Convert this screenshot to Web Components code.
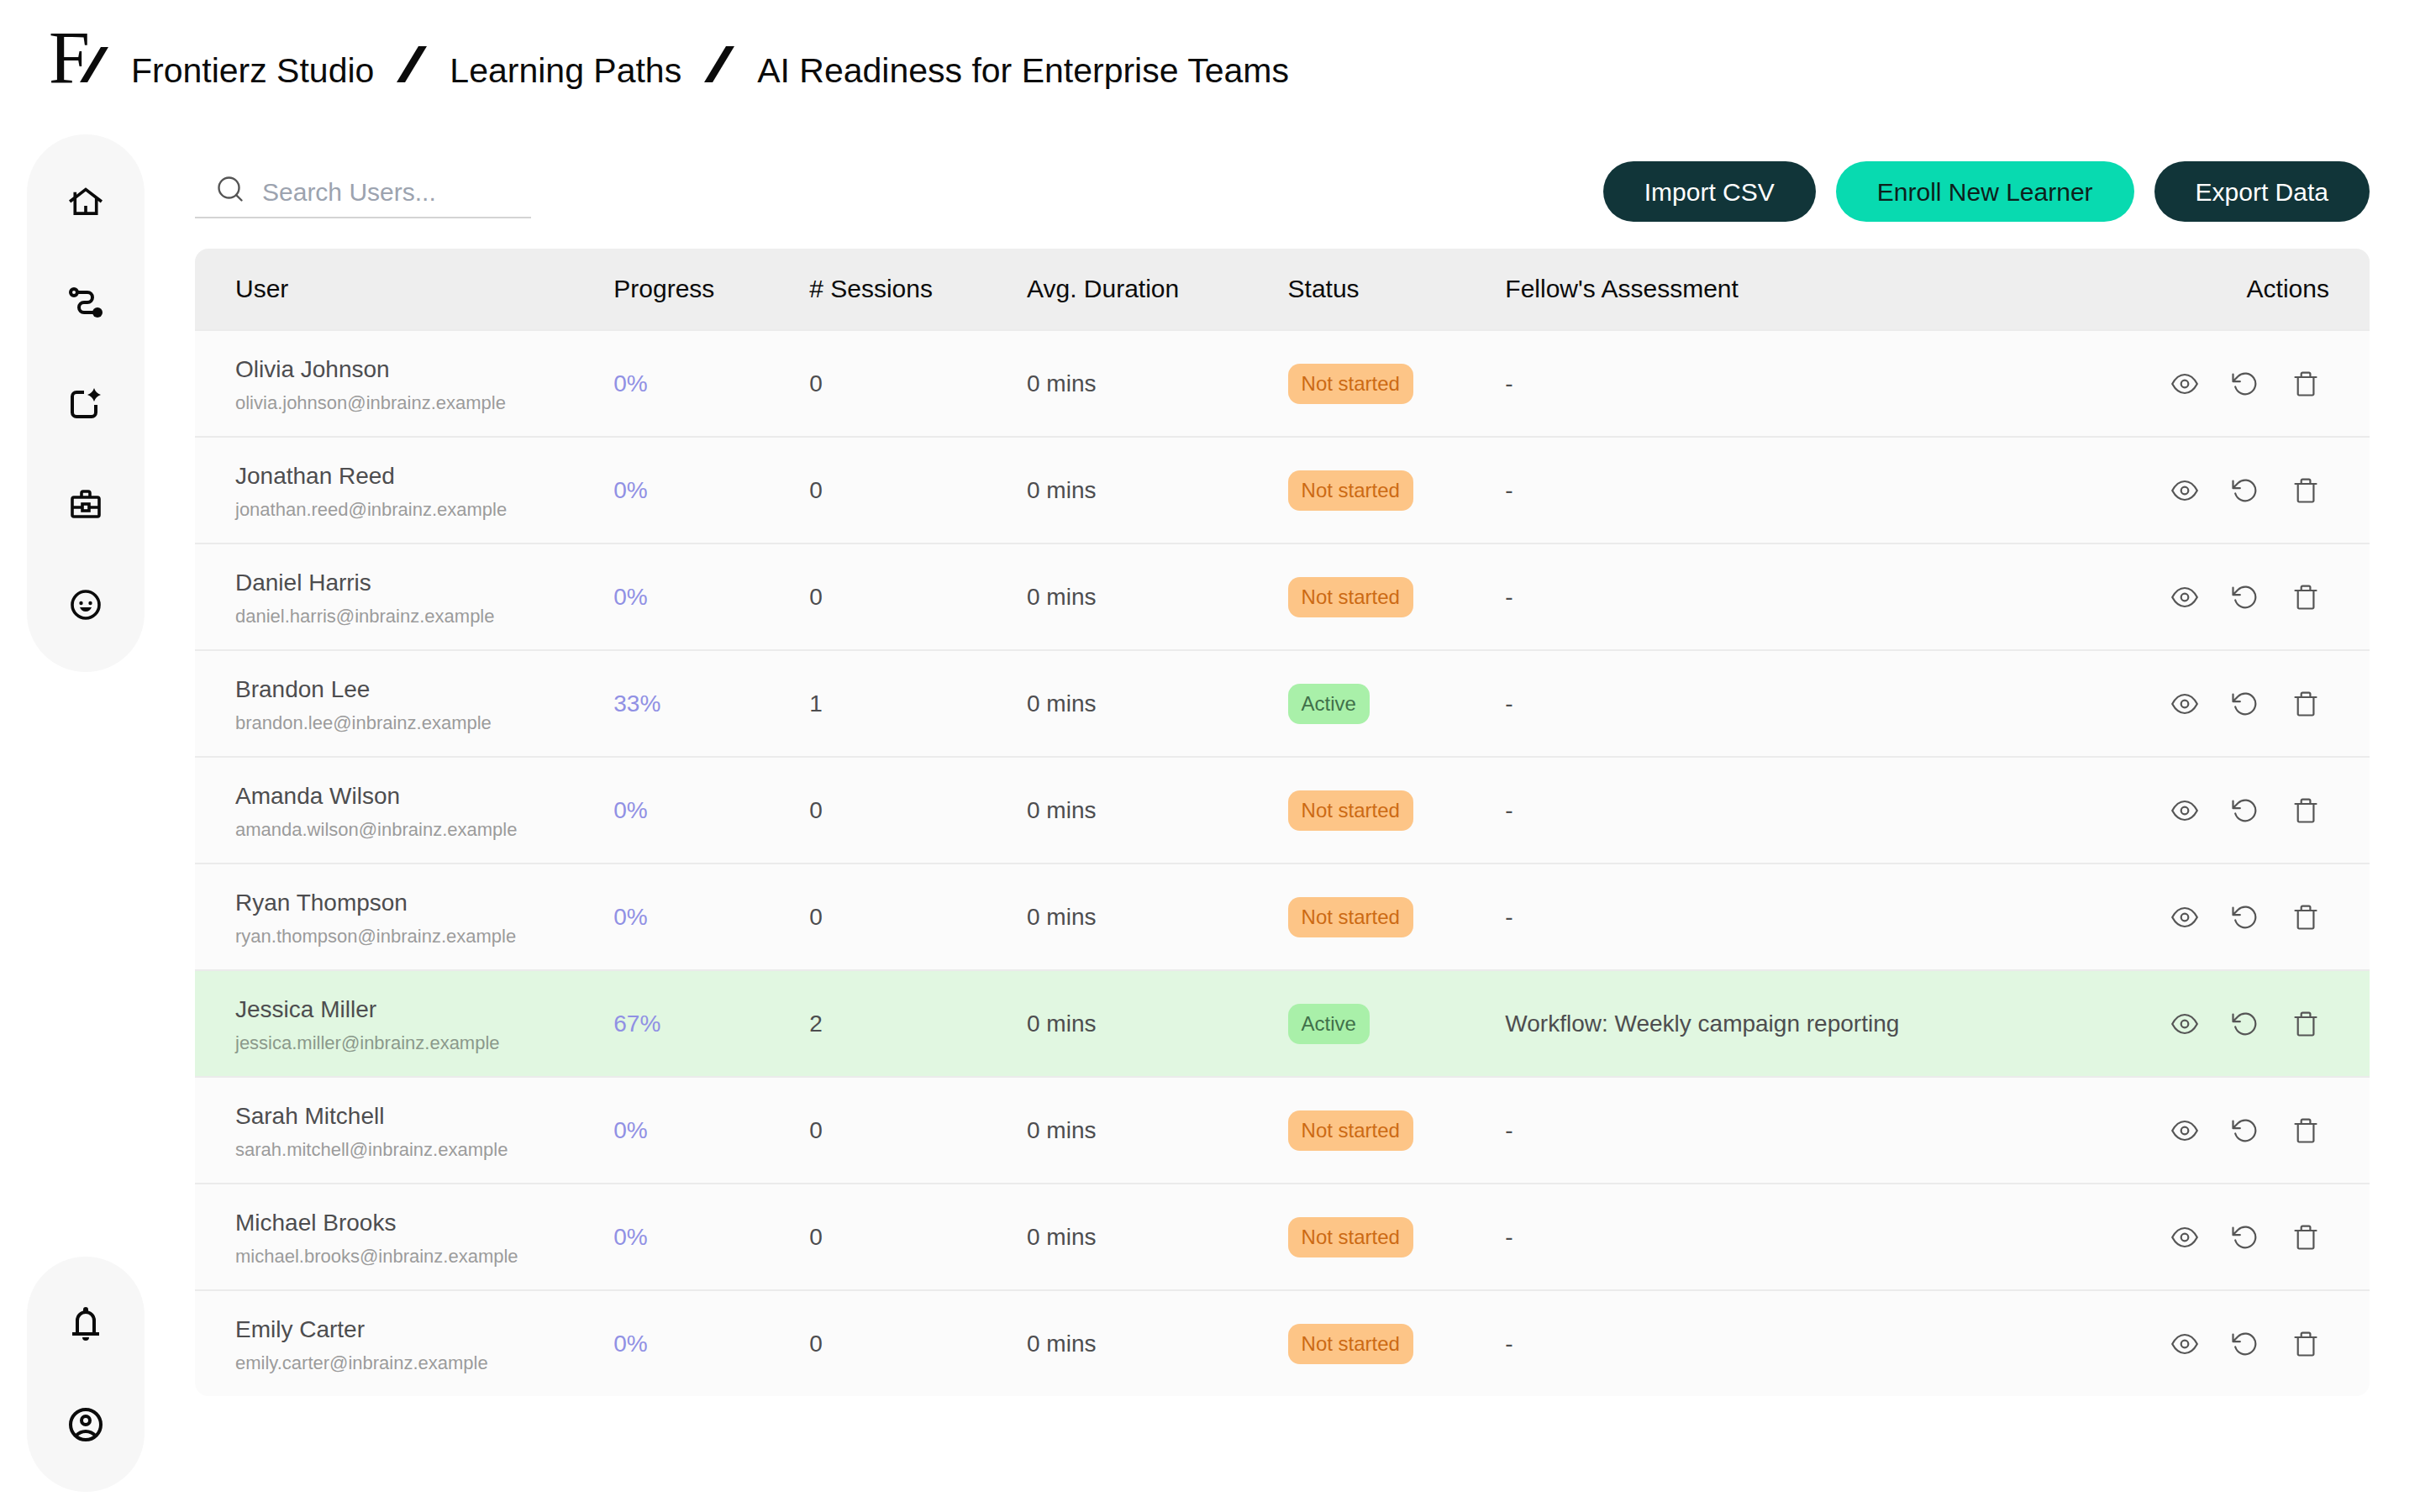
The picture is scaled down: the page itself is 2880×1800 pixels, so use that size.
<!DOCTYPE html>
<html lang="en">
<head>
<meta charset="utf-8">
<title>AI Readiness for Enterprise Teams</title>
<style>
* {
    box-sizing: border-box;
}
body {
    margin: 0;
    background: #fff;
    color: #0b0b0b;
    font-family: "Liberation Sans", Arial, sans-serif;
    font-size: 30px;
}
</style>
</head>
<body>
<app-shell>
    <path-header slot="header"></path-header>
    <nav-rail slot="nav" label="Main" icons="home,route,create,briefcase,smile"></nav-rail>
    <nav-rail slot="nav" label="Account" icons="bell,account"></nav-rail>
    <search-field slot="toolbar" placeholder="Search Users..."></search-field>
    <pill-button slot="toolbar">Import CSV</pill-button>
    <pill-button slot="toolbar" accent>Enroll New Learner</pill-button>
    <pill-button slot="toolbar">Export Data</pill-button>
    <learner-table></learner-table>
</app-shell>

<script>
const navIcons = {
    home: `<svg viewBox="-1.2 -1 26.4 26.4" fill="currentColor"><path d="M12 3L6 7.6V6H4v3.1L1 11.4 2.2 13 4 11.6V21h16v-9.4l1.8 1.4L23 11.4zM18 19h-5v-4h-2v4H6v-8.9l6-4.6 6 4.6z"/></svg>`,
    route: `<svg viewBox="0 0 48 48" fill="none" stroke="currentColor" stroke-width="4"><circle cx="10" cy="12" r="4"/><path d="M14 12h12a6 6 0 0 1 0 12h-4a6 6 0 0 0 0 12h12"/><circle cx="38" cy="36" r="6" fill="currentColor" stroke="none"/></svg>`,
    create: `<svg viewBox="0 0 48 48" fill="none" stroke="currentColor" stroke-width="4"><path d="M22 11H13a5 5 0 0 0-5 5v19a5 5 0 0 0 5 5h18a5 5 0 0 0 5-5v-9"/><path d="M34 6q2 6 8 8-6 2-8 8-2-6-8-8 6-2 8-8z" fill="currentColor" stroke="none"/></svg>`,
    briefcase: `<svg viewBox="0 0 48 48" fill="none" stroke="currentColor" stroke-width="3.600"><rect x="8" y="16" width="32" height="23" rx="2"/><path d="M19 16v-5a2 2 0 0 1 2-2h6a2 2 0 0 1 2 2v5M8 28h11M29 28h11"/><rect x="20" y="24" width="8" height="8"/></svg>`,
    smile: `<svg viewBox="0 0 48 48" fill="none" stroke="currentColor" stroke-width="3.600"><circle cx="24" cy="24" r="16"/><g fill="currentColor" stroke="none"><circle cx="18.500" cy="22" r="2.200"/><circle cx="29.500" cy="22" r="2.200"/><path d="M17 27h14q-2 5-7 5t-7-5z"/></g></svg>`,
    bell: `<svg viewBox="0 0 48 48" fill="none" stroke="currentColor" stroke-width="4"><path d="M14 35V20a10 10 0 0 1 20 0v15M8 36h32"/><g fill="currentColor" stroke="none"><path d="M21 10V7a3 3 0 0 1 6 0v3zM20 40h8a4 4 0 0 1-8 0z"/></g></svg>`,
    account: `<svg viewBox="0 0 48 48" fill="none" stroke="currentColor" stroke-width="4"><circle cx="24" cy="24" r="18"/><circle cx="24" cy="19" r="5"/><path d="M12 37.500c7-7.500 17-7.500 24 0"/></svg>`
};

const actionIcons = {
    View: `<svg viewBox="0 0 32 32"><path d="M1.200 16C5 9 10 5 16 5s11 4 14.800 11C27 23 22 27 16 27S5 23 1.200 16z"/><circle cx="16" cy="16" r="4.300"/></svg>`,
    Reset: `<svg viewBox="0 0 32 32"><path d="M4.200 19.500A12.300 12.300 0 1 0 7.500 7L1.500 13M1.500 4.500v8.700h8.300"/></svg>`,
    Delete: `<svg viewBox="0 0 32 32"><path d="M3.500 8h25M6.700 8v20a1.500 1.500 0 0 0 1.500 1.500h15.700a1.500 1.500 0 0 0 1.500-1.500V8M10.700 8V4.200A1.500 1.500 0 0 1 12.200 2.700h7.700a1.500 1.500 0 0 1 1.500 1.500V8"/></svg>`
};

const learners = [
    { name: "Olivia Johnson", progress: 0, sessions: 0 },
    { name: "Jonathan Reed", progress: 0, sessions: 0 },
    { name: "Daniel Harris", progress: 0, sessions: 0 },
    { name: "Brandon Lee", progress: 33, sessions: 1 },
    { name: "Amanda Wilson", progress: 0, sessions: 0 },
    { name: "Ryan Thompson", progress: 0, sessions: 0 },
    { name: "Jessica Miller", progress: 67, sessions: 2, assessment: "Workflow: Weekly campaign reporting", highlight: true },
    { name: "Sarah Mitchell", progress: 0, sessions: 0 },
    { name: "Michael Brooks", progress: 0, sessions: 0 },
    { name: "Emily Carter", progress: 0, sessions: 0 }
];

class AppShell extends HTMLElement {
    constructor() {
        super();
        this.attachShadow({ mode: "open" }).innerHTML = `
        <style>
        * {
            box-sizing: border-box;
        }
        :host {
            display: flex;
            flex-direction: column;
            min-height: 100vh;
        }
        .body {
            flex: 1;
            display: flex;
            gap: 60px;
            padding: 0 60px 24px 32px;
        }
        aside {
            flex: none;
            display: flex;
            flex-direction: column;
            justify-content: space-between;
            gap: 32px;
        }
        main {
            flex: 1;
            min-width: 0;
            padding-top: 32px;
        }
        .toolbar {
            display: flex;
            gap: 24px;
            margin-bottom: 32px;
        }
        </style>
        <slot name="header"></slot>
        <div class="body">
            <aside><slot name="nav"></slot></aside>
            <main>
                <div class="toolbar"><slot name="toolbar"></slot></div>
                <slot></slot>
            </main>
        </div>`;
    }
}

class PathHeader extends HTMLElement {
    constructor() {
        super();
        const slash = `<svg class="slash" width="36" height="43" viewBox="0 0 36 43" aria-hidden="true"><path d="M26 0h10L10 43H0z"/></svg>`;
        this.attachShadow({ mode: "open" }).innerHTML = `
        <style>
        :host {
            display: block;
            padding: 24px 58px 0;
        }
        nav {
            display: flex;
            align-items: baseline;
            gap: 27px;
            min-height: 136px;
            font-size: 41px;
            line-height: 48px;
            white-space: nowrap;
        }
        a {
            color: inherit;
            text-decoration: none;
        }
        .logo {
            display: flex;
            align-items: baseline;
            font-family: "Liberation Serif", "Times New Roman", serif;
            font-size: 88px;
            line-height: 90px;
        }
        .logo svg {
            margin-left: -12px;
        }
        svg {
            flex: none;
            fill: currentColor;
        }
        </style>
        <nav aria-label="Breadcrumb">
            <a class="logo" href="#" aria-label="Home">F<svg width="34" height="42" viewBox="0 0 34 42" aria-hidden="true"><path d="M25 0h9L9 42H0z"/></svg></a>
            <a href="#">Frontierz Studio</a>
            ${slash}
            <a href="#">Learning Paths</a>
            ${slash}
            <a href="#" aria-current="page">AI Readiness for Enterprise Teams</a>
        </nav>`;
    }
}

class NavRail extends HTMLElement {
    connectedCallback() {
        const links = this.getAttribute("icons").split(",")
            .map(name => `<a href="#${name}" aria-label="${name}">${navIcons[name]}</a>`)
            .join("");
        this.attachShadow({ mode: "open" }).innerHTML = `
        <style>
        :host {
            display: block;
        }
        nav {
            display: flex;
            flex-direction: column;
            padding: 20px 10px;
            border-radius: 70px;
            background: #f7f7f7;
        }
        a {
            display: flex;
            align-items: center;
            justify-content: center;
            width: 120px;
            height: 120px;
            color: inherit;
        }
        svg {
            width: 48px;
            height: 48px;
        }
        </style>
        <nav aria-label="${this.getAttribute("label")}">${links}</nav>`;
    }
}

class SearchField extends HTMLElement {
    connectedCallback() {
        this.attachShadow({ mode: "open" }).innerHTML = `
        <style>
        :host {
            display: block;
            width: 400px;
            margin-right: auto;
        }
        label {
            display: flex;
            align-items: center;
            gap: 20px;
            height: 68px;
            padding-left: 24px;
            border-bottom: 2px solid #d4d4d4;
            box-sizing: border-box;
        }
        svg {
            flex: none;
            width: 36px;
            height: 36px;
            fill: none;
            stroke: #555;
            stroke-width: 1.6;
            stroke-linecap: round;
        }
        input {
            flex: 1;
            min-width: 0;
            padding: 8px 0 0;
            border: 0;
            outline: 0;
            background: none;
            color: inherit;
            font: inherit;
        }
        input::placeholder {
            color: #9ca3af;
        }
        </style>
        <label>
            <svg viewBox="0 0 24 24" aria-hidden="true"><circle cx="11" cy="11" r="8"/><path d="M21 21l-4.300-4.300"/></svg>
            <input type="search" aria-label="Search users" placeholder="${this.getAttribute("placeholder")}">
        </label>`;
    }
}

class PillButton extends HTMLElement {
    constructor() {
        super();
        this.attachShadow({ mode: "open" }).innerHTML = `
        <style>
        :host {
            display: block;
            --bg: #113539;
            --fg: #fff;
        }
        :host([accent]) {
            --bg: #08dab0;
            --fg: #0d1f1c;
        }
        button {
            height: 72px;
            padding: 2px 49px 0;
            border: 0;
            border-radius: 36px;
            background: var(--bg);
            color: var(--fg);
            font: inherit;
            white-space: nowrap;
            cursor: pointer;
        }
        </style>
        <button type="button"><slot></slot></button>`;
    }
}

class StatusBadge extends HTMLElement {
    constructor() {
        super();
        this.attachShadow({ mode: "open" }).innerHTML = `
        <style>
        :host {
            display: inline-block;
            padding: 0 16px;
            border-radius: 14px;
            background: #fdc587;
            color: #cc6a14;
            font-size: 24px;
            line-height: 48px;
            vertical-align: middle;
            white-space: nowrap;
        }
        :host([active]) {
            background: #a9f0a9;
            color: #41704a;
        }
        </style>
        <slot></slot>`;
    }
}

class RowActions extends HTMLElement {
    constructor() {
        super();
        const buttons = Object.entries(actionIcons)
            .map(([label, icon]) => `<button type="button" aria-label="${label}">${icon}</button>`)
            .join("");
        this.attachShadow({ mode: "open" }).innerHTML = `
        <style>
        :host {
            display: flex;
            justify-content: flex-end;
            gap: 16px;
        }
        button {
            display: flex;
            padding: 12px;
            border: 0;
            background: none;
            color: #555;
            cursor: pointer;
        }
        svg {
            width: 32px;
            height: 32px;
            fill: none;
            stroke: currentColor;
            stroke-width: 2.2;
            stroke-linecap: round;
            stroke-linejoin: round;
        }
        </style>
        ${buttons}`;
    }
}

class LearnerTable extends HTMLElement {
    constructor() {
        super();
        this.attachShadow({ mode: "open" });
        this.render();
    }

    renderRow(learner) {
        const email = learner.name.toLowerCase().replace(" ", ".") + "@inbrainz.example";
        const status = learner.sessions
            ? `<status-badge active>Active</status-badge>`
            : `<status-badge>Not started</status-badge>`;
        return `
        <tr class="${learner.highlight ? "highlight" : ""}">
            <td class="user"><div>${learner.name}</div><div class="email">${email}</div></td>
            <td class="progress">${learner.progress}%</td>
            <td>${learner.sessions}</td>
            <td>0 mins</td>
            <td>${status}</td>
            <td>${learner.assessment || "-"}</td>
            <td><row-actions></row-actions></td>
        </tr>`;
    }

    render() {
        this.shadowRoot.innerHTML = `
        <style>
        :host {
            display: block;
            overflow: hidden;
            border-radius: 16px;
            background: #fbfbfb;
        }
        table {
            width: 100%;
            table-layout: fixed;
            border-spacing: 0;
            text-align: left;
            white-space: nowrap;
        }
        th {
            height: 98px;
            padding: 0 0 0 48px;
            border-bottom: 2px solid #ebebeb;
            background: #eee;
            font-weight: normal;
            box-sizing: border-box;
        }
        th:nth-child(1) { width: 17.4%; }
        th:nth-child(2) { width: 9%; }
        th:nth-child(3) { width: 10%; }
        th:nth-child(4) { width: 12%; }
        th:nth-child(5) { width: 10%; }
        th:last-child,
        td:last-child {
            padding-right: 48px;
            text-align: right;
        }
        td {
            padding: 0 0 0 48px;
            border-bottom: 2px solid #ebebeb;
            color: #4d4d4f;
            font-size: 28px;
            line-height: 40px;
        }
        td.user {
            padding: 26px 0 19px 48px;
        }
        .email {
            color: #9b9b9b;
            font-size: 22px;
        }
        .progress {
            color: #9090e4;
        }
        .highlight td {
            background: #e1f7e1;
        }
        .highlight .email {
            color: #8b998b;
        }
        tr:last-child td {
            border-bottom: 0;
        }
        </style>
        <table>
            <thead>
                <tr>
                    <th>User</th>
                    <th>Progress</th>
                    <th># Sessions</th>
                    <th>Avg. Duration</th>
                    <th>Status</th>
                    <th>Fellow's Assessment</th>
                    <th>Actions</th>
                </tr>
            </thead>
            <tbody>${learners.map(this.renderRow).join("")}</tbody>
        </table>`;
    }
}

customElements.define("app-shell", AppShell);
customElements.define("path-header", PathHeader);
customElements.define("nav-rail", NavRail);
customElements.define("search-field", SearchField);
customElements.define("pill-button", PillButton);
customElements.define("status-badge", StatusBadge);
customElements.define("row-actions", RowActions);
customElements.define("learner-table", LearnerTable);
</script>
</body>
</html>
